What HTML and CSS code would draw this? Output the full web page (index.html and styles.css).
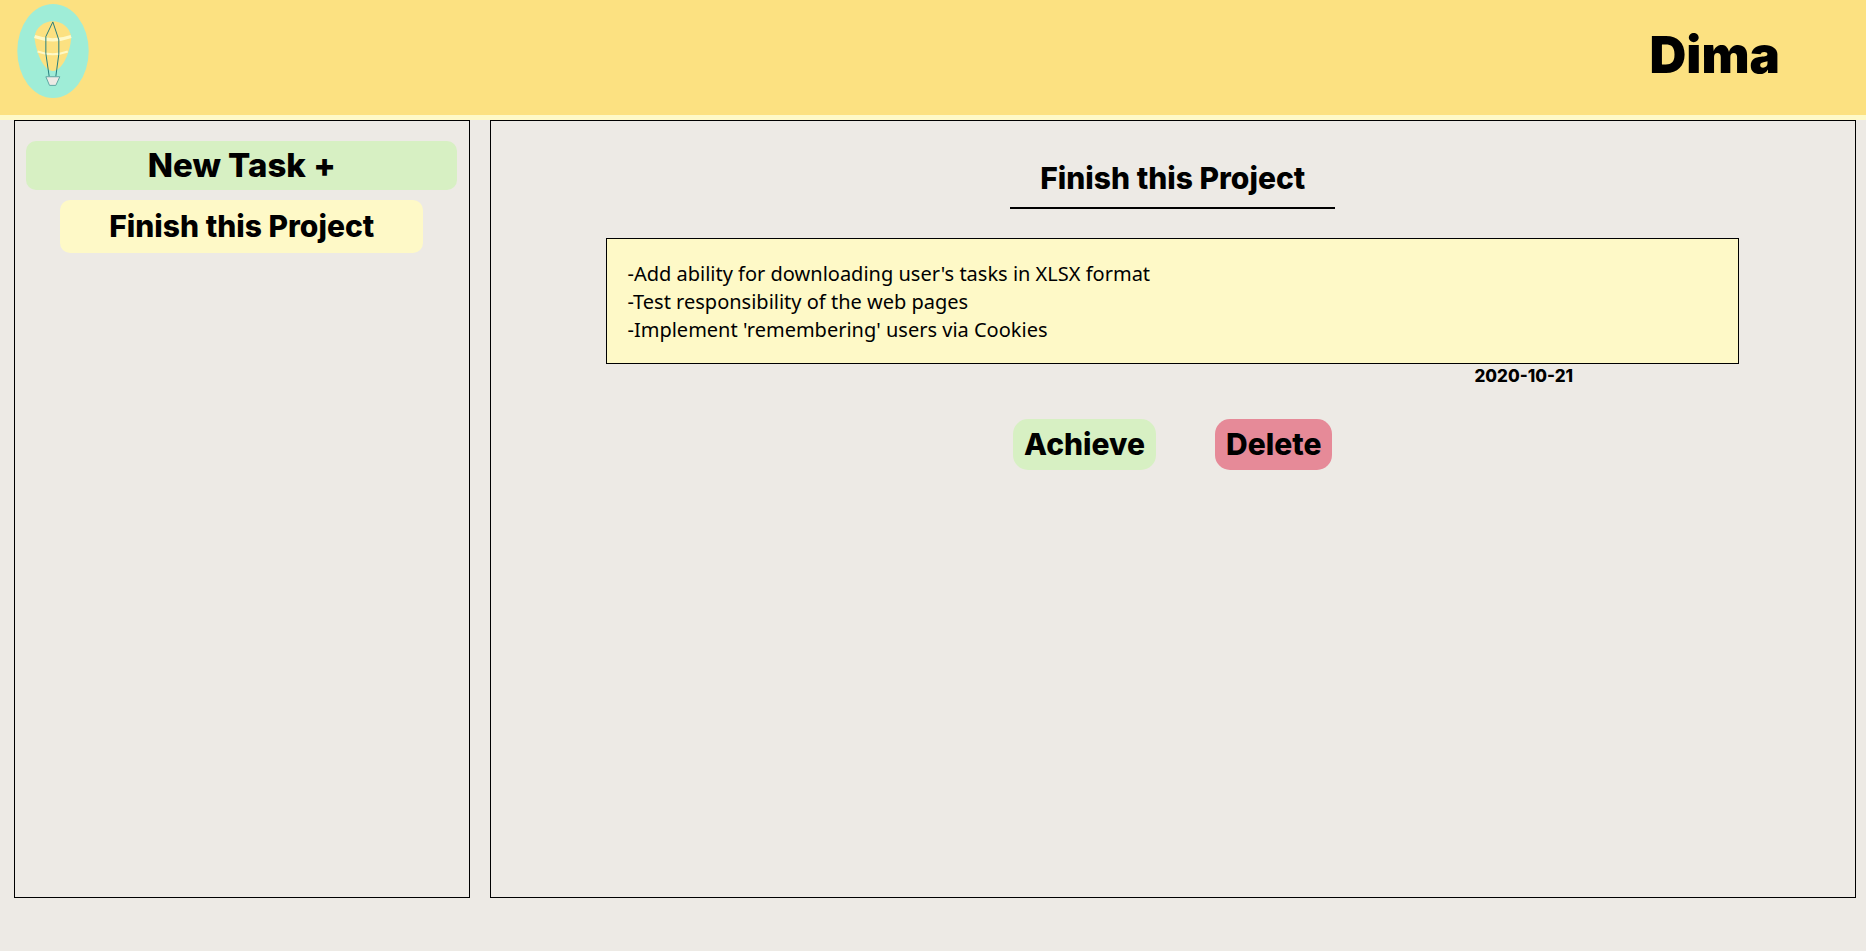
FILE: index.html
```html
<!DOCTYPE html>
<html lang="en">
<head>
<meta charset="utf-8">
<meta name="viewport" content="width=device-width, initial-scale=1">
<title>Tasks</title>
<link rel="stylesheet" href="styles.css">
</head>
<body>
<header class="header">
  <a class="logo" href="#" aria-label="Home">
    <svg class="logo-image" viewBox="53 11 215 283" aria-hidden="true">
      <ellipse cx="160.500" cy="152.500" rx="107.500" ry="141.500" fill="#9fedd7"/>
      <path d="M105 112C107 82 133 63 160 63S213 82 215 112C214 150 190 213 160 213S108 150 105 112Z" fill="#fce181"/>
      <path d="M105 109Q132 119 160 119T215 109" fill="none" stroke="#fef9c7" stroke-width="10"/>
      <path d="M114 154Q136 162 160 162T205 154" fill="none" stroke="#fef9c7" stroke-width="6"/>
      <path d="M149 229L139 160V109L160 65L178 119V162L169 229" fill="none" stroke="#267d7c" stroke-width="3"/>
      <path d="M139 230H181L169 256H150Z" fill="#edeae5" stroke="#5da8a3" stroke-width="3"/>
    </svg>
  </a>
  <a class="user" href="#">Dima</a>
</header>
<div class="layout">
  <nav class="panel sidebar">
    <button class="new-task" type="button">New Task +</button>
    <button class="task-item" type="button">Finish this Project</button>
  </nav>
  <main class="panel task">
    <h1 class="task-title">Finish this Project</h1>
    <p class="task-text">-Add ability for downloading user's tasks in XLSX format
-Test responsibility of the web pages
-Implement 'remembering' users via Cookies</p>
    <time class="task-date" datetime="2020-10-21">2020-10-21</time>
    <div class="actions">
      <button class="action achieve" type="button">Achieve</button>
      <button class="action delete" type="button">Delete</button>
    </div>
  </main>
</div>
</body>
</html>
```
FILE: styles.css
```css
* { box-sizing: border-box; }

body {
  display: flex;
  flex-direction: column;
  min-height: 100vh;
  margin: 0;
  background: #edeae5;
  color: #000;
  font-family: Inter, "Open Sans", sans-serif;
  font-weight: 800;
}

button {
  border: 0;
  color: inherit;
  font: inherit;
  cursor: pointer;
}

.header {
  display: flex;
  justify-content: space-between;
  padding: 4px 86px 17px 17px;
  border-bottom: 5px solid #fef9c7;
  background: #fce181;
}

.logo-image { display: block; width: 72px; height: 94px; }

.user {
  padding-top: 19px;
  color: inherit;
  font-size: 51px;
  font-weight: 900;
  line-height: 64px;
  text-decoration: none;
}

.layout {
  display: grid;
  flex: 1;
  grid-template-columns: 1fr 3fr;
  gap: 20px;
  padding: 0 10px 53px 14px;
}

.panel {
  display: flex;
  flex-direction: column;
  align-items: center;
  border: 1px solid #000;
}

.sidebar { gap: 10px; padding-top: 20px; }

.new-task {
  width: 95%;
  padding: 0 0 1px;
  border-radius: 10px;
  background: #d7f0c3;
  font-size: 33px;
  line-height: 48px;
}

.task-item {
  width: 80%;
  padding: 0 0 1px;
  border-radius: 10px;
  background: #fef9c7;
  font-size: 30px;
  line-height: 52px;
}

.task { padding-top: 38px; }

.task-title {
  margin: 0 0 29px;
  padding: 0 30px 10px;
  border-bottom: 2px solid #000;
  font-size: 30px;
  font-weight: inherit;
  line-height: 38px;
}

.task-text {
  width: 83%;
  margin: 0;
  padding: 21px 20px 19px;
  border: 1px solid #000;
  background: #fef9c7;
  font-family: "Comic Sans MS", "Noto Sans", sans-serif;
  font-size: 20px;
  font-weight: 400;
  line-height: 28px;
  white-space: pre-wrap;
}

.task-date {
  align-self: flex-end;
  margin-right: 282px;
  font-size: 17px;
  line-height: 25px;
}

.actions {
  display: flex;
  gap: 59px;
  margin-top: 30px;
}

.action {
  padding: 0 11px 1px;
  border-radius: 15px;
  font-size: 30px;
  line-height: 50px;
}

.achieve { background: #d7f0c3; }
.delete { background: #e68a98; }
```
